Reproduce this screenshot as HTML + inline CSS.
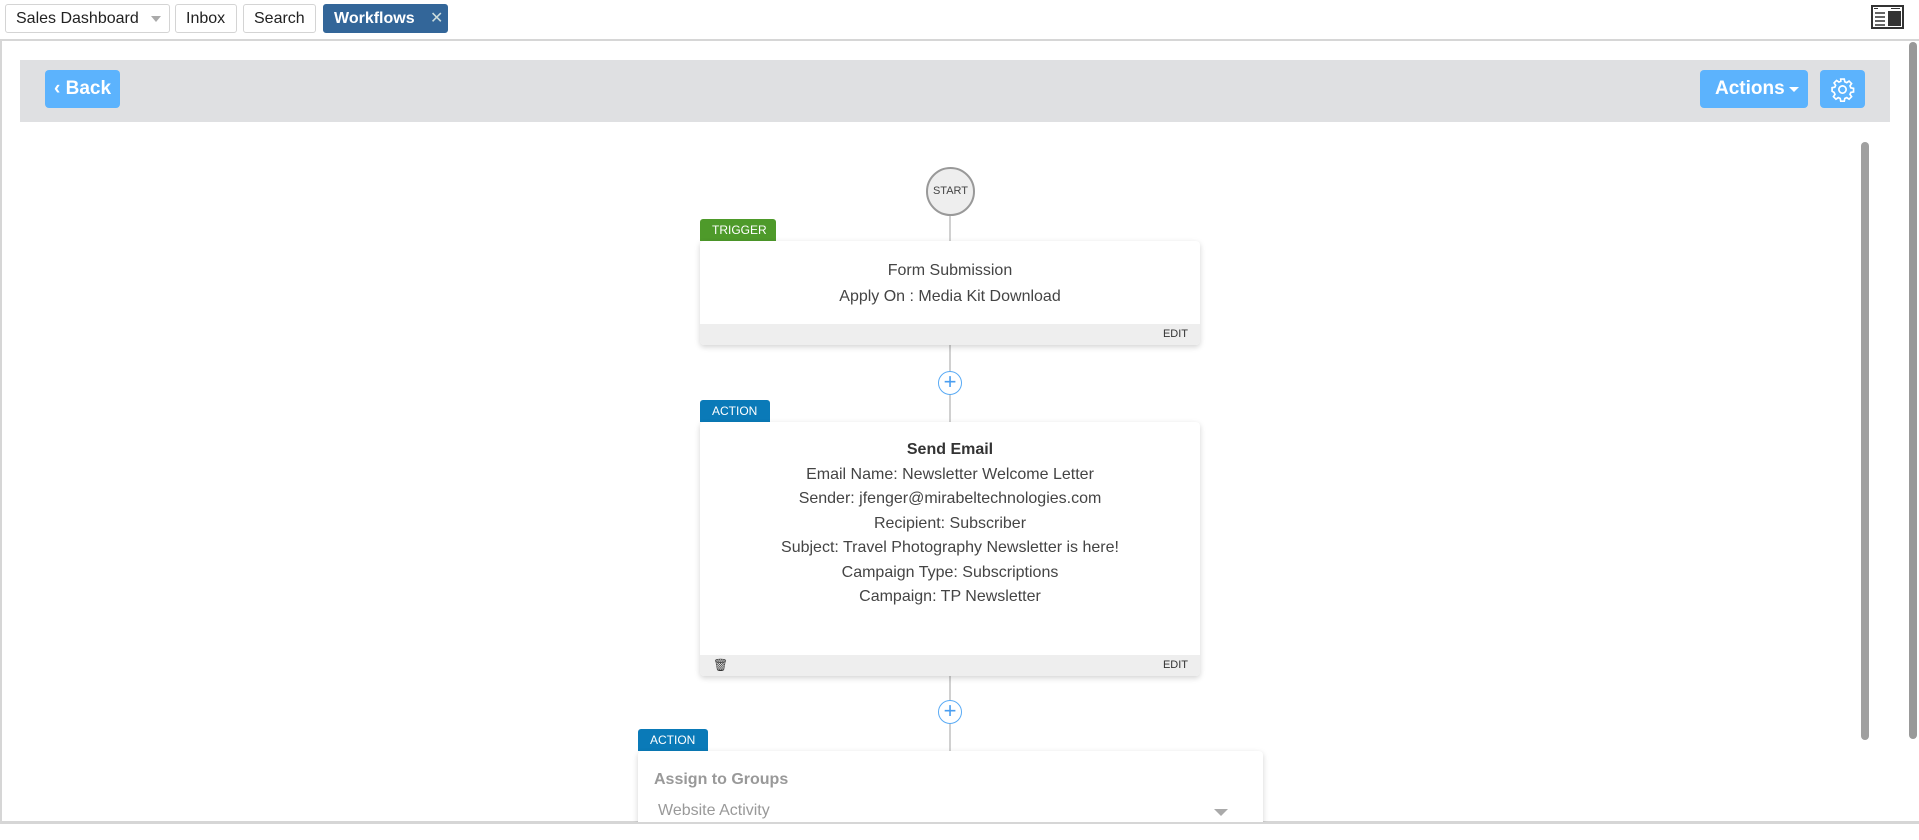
<!DOCTYPE html>
<html style="overflow:hidden;height:840px"><head><meta charset="utf-8"><style>
*{box-sizing:border-box;margin:0;padding:0}
body{width:1919px;height:840px;background:#fff;font-family:"Liberation Sans",sans-serif;position:relative;overflow:hidden}
.a{position:absolute}
.tab{position:absolute;top:4px;height:29px;border:1px solid #d4d4d4;border-radius:3px;font-size:16px;color:#222;line-height:27px;padding-left:10px;background:#fff}
.card{position:absolute;background:#fff;border-radius:4px;box-shadow:0 2px 6px rgba(0,0,0,.18);text-align:center;color:#444;font-size:16px}
.foot{position:absolute;left:0;right:0;bottom:0;height:21px;background:#eee;border-radius:0 0 4px 4px;font-size:11px;color:#333;text-align:right;padding-right:12px;line-height:21px}
.tag{position:absolute;color:#fff;font-size:12px;line-height:22px;padding-left:12px;border-radius:3px 3px 0 0}
.plus{position:absolute;width:24px;height:24px;border:1px solid #5aabf5;border-radius:50%;background:#fff;color:#4a9ef0;font-size:22px;line-height:20px;text-align:center}
.btn{position:absolute;background:#5cb3fd;border-radius:4px;color:#fff;font-weight:bold;font-size:19px}
</style></head><body>
<div class="tab" style="left:5px;width:165px">Sales Dashboard<span class="a" style="left:145px;top:11px;border:5px solid transparent;border-top:6px solid #aaa"></span></div>
<div class="tab" style="left:175px;width:62px">Inbox</div>
<div class="tab" style="left:243px;width:73px">Search</div>
<div class="tab" style="left:323px;width:125px;background:#336699;border-color:#336699;color:#fff;font-weight:bold">Workflows<span class="a" style="left:106px;top:0;font-weight:normal;color:#cdd">✕</span></div>
<svg class="a" style="left:1871px;top:5px" width="33" height="24" viewBox="0 0 33 24"><rect x="1" y="1" width="31" height="22" fill="#fff" stroke="#333" stroke-width="2"/><rect x="17" y="6" width="13" height="15" fill="#333"/><path d="M4 8h10M4 12h10M4 16h10M4 20h10" stroke="#333" stroke-width="1.5"/><path d="M3 3.5h4M20 3.5h9" stroke="#333" stroke-width="1"/></svg>
<div class="a" style="left:0;top:39px;width:1919px;height:784px;border:2px solid #d6d6d6;border-right:none"></div>
<div class="a" style="left:1909px;top:42px;width:8px;height:697px;background:#999;border-radius:4px"></div>
<div class="a" style="left:20px;top:60px;width:1870px;height:62px;background:#dfe0e2"></div>
<div class="btn" style="left:45px;top:70px;width:75px;height:38px;line-height:38px;padding-left:9px">‹ Back</div>
<div class="btn" style="left:1700px;top:70px;width:108px;height:38px;line-height:38px;padding-left:15px">Actions<span class="a" style="left:89px;top:17px;border:5px solid transparent;border-top:5px solid #fff"></span></div>
<div class="btn" style="left:1820px;top:70px;width:45px;height:38px"><svg class="a" style="left:10px;top:7px" width="25" height="25" viewBox="0 0 24 24" fill="none" stroke="#fff" stroke-width="1.6"><circle cx="12" cy="12" r="3.5"/><path d="M10.3 2h3.4l.5 2.6 1.9.8 2.2-1.5 2.4 2.4-1.5 2.2.8 1.9 2.6.5v3.4l-2.6.5-.8 1.9 1.5 2.2-2.4 2.4-2.2-1.5-1.9.8-.5 2.6h-3.4l-.5-2.6-1.9-.8-2.2 1.5-2.4-2.4 1.5-2.2-.8-1.9L2 13.7v-3.4l2.6-.5.8-1.9-1.5-2.2 2.4-2.4 2.2 1.5 1.9-.8z"/></svg></div>
<div class="a" style="left:1861px;top:142px;width:8px;height:598px;background:#a0a0a0;border-radius:4px"></div>
<div class="a" style="left:949px;top:214px;width:2px;height:540px;background:#d0d0d0"></div>
<div class="a" style="left:926px;top:167px;width:49px;height:49px;border:2px solid #999;border-radius:50%;background:#eee;font-size:11px;color:#444;text-align:center;line-height:45px">START</div>
<div class="tag" style="left:700px;top:219px;width:76px;background:#4e9a2a">TRIGGER</div>
<div class="card" style="left:700px;top:241px;width:500px;height:104px"><div style="margin-top:17px;line-height:26px">Form Submission<br>Apply On : Media Kit Download</div><div class="foot">EDIT</div></div>
<div class="plus" style="left:938px;top:371px">+</div>
<div class="tag" style="left:700px;top:400px;width:70px;background:#0a7ab8">ACTION</div>
<div class="card" style="left:700px;top:422px;width:500px;height:254px"><div style="margin-top:16px;line-height:24.5px"><b style="color:#333">Send Email</b><br>Email Name: Newsletter Welcome Letter<br>Sender: jfenger@mirabeltechnologies.com<br>Recipient: Subscriber<br>Subject: Travel Photography Newsletter is here!<br>Campaign Type: Subscriptions<br>Campaign: TP Newsletter</div><div class="foot">EDIT<span class="a" style="left:13px;top:0;font-size:12px">🗑</span></div></div>
<div class="plus" style="left:938px;top:700px">+</div>
<div class="tag" style="left:638px;top:729px;width:70px;background:#0a7ab8">ACTION</div>
<div class="card" style="left:638px;top:751px;width:625px;height:80px;text-align:left;border-radius:4px 4px 0 0"><div class="a" style="left:16px;top:20px;font-weight:bold;color:#999;font-size:16px">Assign to Groups</div><div class="a" style="left:20px;top:51px;color:#999;font-size:16px">Website Activity</div><span class="a" style="left:576px;top:58px;border:7px solid transparent;border-top:7px solid #aaa"></span></div>
<div class="a" style="left:0;top:822px;width:1919px;height:18px;background:#fff;border-top:2px solid #d6d6d6"></div>
</body></html>
